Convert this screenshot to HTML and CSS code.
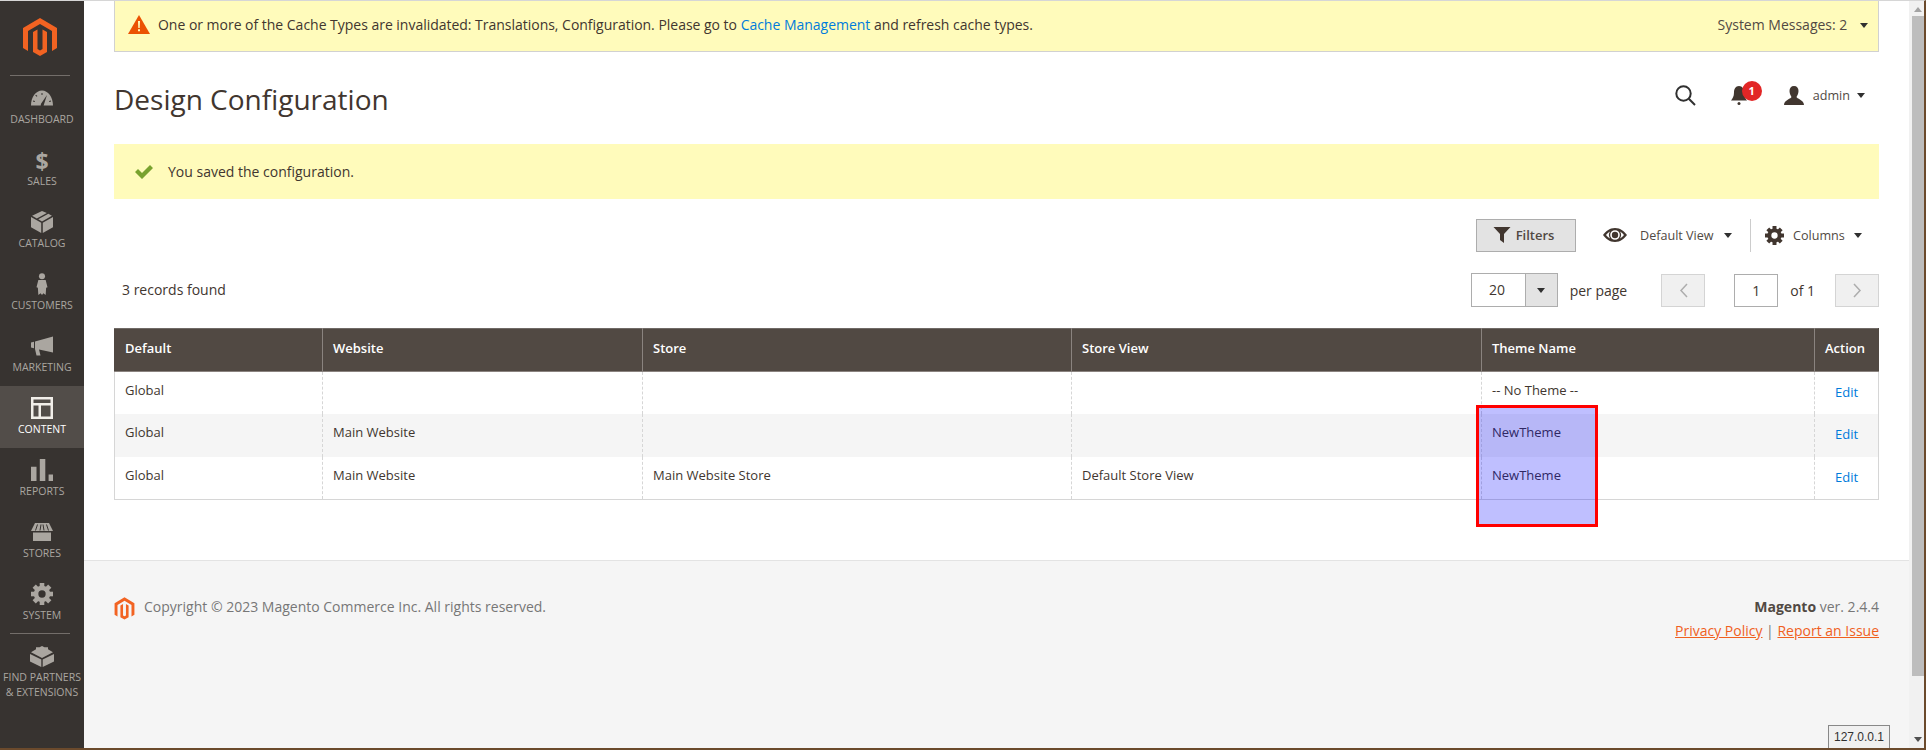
FILE: index.html
```html
<!DOCTYPE html>
<html lang="en">
<head>
  <meta charset="UTF-8" />
  <title>Design Configuration / Magento Admin</title>
  <link rel="stylesheet" href="styles.css">
</head>
<body>
  <svg class="defs" width="0" height="0">
    <symbol id="magento" viewBox="0 0 36 40">
      <path d="M18 0L35 10V30L30 33V13L18 6L6 13V33L1 30V10Z"/>
      <path d="M11 14L15.500 11.500V31L18 32.500L20.500 31V11.500L25 14V34L18 38L11 34Z"/>
    </symbol>
    <symbol id="gear" viewBox="0 0 24 24">
      <circle cx="12" cy="12" r="6.500" fill="none" stroke="currentColor" stroke-width="5"/>
      <g fill="currentColor">
        <rect x="9.500" y="0" width="5" height="5"/>
        <rect x="9.500" y="0" width="5" height="5" transform="rotate(45 12 12)"/>
        <rect x="9.500" y="0" width="5" height="5" transform="rotate(90 12 12)"/>
        <rect x="9.500" y="0" width="5" height="5" transform="rotate(135 12 12)"/>
        <rect x="9.500" y="0" width="5" height="5" transform="rotate(180 12 12)"/>
        <rect x="9.500" y="0" width="5" height="5" transform="rotate(225 12 12)"/>
        <rect x="9.500" y="0" width="5" height="5" transform="rotate(270 12 12)"/>
        <rect x="9.500" y="0" width="5" height="5" transform="rotate(315 12 12)"/>
      </g>
    </symbol>
  </svg>

  <div class="app">
    <aside class="sidebar">
      <div class="sidebar-logo">
        <svg class="logo-mark"><use href="#magento"/></svg>
      </div>
      <nav class="menu">
        <a class="menu-item">
          <svg class="menu-icon" viewBox="0 0 22 15"><path fill-rule="evenodd" d="M0 15C0 6.500 5 0 11 0s11 6.500 11 15H12.600L16 4.500 10 13.200 9.700 15zM4 10.500l-1.800-.6-.3 1 1.800.6zM6.400 5.500L5 4.200l-.7.800 1.400 1.300zM10.500 2.500h1v2h-1zM19.800 9.900l-1.800.6.300 1 1.800-.6z"/></svg>
          <span>Dashboard</span>
        </a>
        <a class="menu-item">
          <span class="dollar">$</span>
          <span>Sales</span>
        </a>
        <a class="menu-item">
          <svg class="menu-icon" viewBox="0 0 20 20"><path d="M9.300 20L0 14.800V5.500l9.300 5.200zM10.700 20l9.300-5.200V5.500l-9.300 5.200zM10 9.500L6.600 7.600l9.200-5.100L19 4.400zM5.300 6.800L1 4.400 10 0l4.400 1.900z"/></svg>
          <span>Catalog</span>
        </a>
        <a class="menu-item">
          <svg class="menu-icon" viewBox="0 0 12 24"><circle cx="6" cy="3.500" r="3.300"/><path d="M2 7.500h8l2 8-1.500.5-.5 8-2.500-1.800L6 24l-1.500-1.800L2 24l-.5-8L0 15.500z"/></svg>
          <span>Customers</span>
        </a>
        <a class="menu-item">
          <svg class="menu-icon" viewBox="0 0 22 19"><path d="M22 0v16L8 13l1.500 6H5.500L4 12.500V5zM0 6l3-.7v6.500L0 11z"/></svg>
          <span>Marketing</span>
        </a>
        <a class="menu-item is-active">
          <svg class="menu-icon" viewBox="0 0 22 22"><path fill-rule="evenodd" d="M0 0h22v22H0zM2.500 2.500v3.500h17V2.500zM2.500 8.500v11h5v-11zM10 8.500v11h9.500v-11z"/></svg>
          <span>Content</span>
        </a>
        <a class="menu-item">
          <svg class="menu-icon" viewBox="0 0 20 20"><path d="M0 7h5v13H0zM8 0h5v20H8zM16 14h4v6h-4z"/></svg>
          <span>Reports</span>
        </a>
        <a class="menu-item">
          <svg class="menu-icon" viewBox="0 0 22 18"><path d="M4 0h14l4 8H0zM2 9.500h18V18H2z"/><path class="cut" d="M6.500 1.500L4.500 7.500M10 1.500L9 7.500M12 1.500L13 7.500M15.500 1.500L17.500 7.500"/></svg>
          <span>Stores</span>
        </a>
        <a class="menu-item menu-item-last">
          <svg class="menu-icon"><use href="#gear"/></svg>
          <span>System</span>
        </a>
        <a class="menu-item menu-item-partners">
          <svg class="menu-icon menu-icon-lego" viewBox="0 0 24 22"><path d="M0 9l11.300 5.500V22L0 16.500zM24 9l-11.300 5.500V22L24 16.500z"/><path d="M12 1l2.500 1.200 3.500 0 0 2 5 3L12 13 1 7.200l5-3v-2h3.500z"/></svg>
          <span>Find Partners<br>&amp; Extensions</span>
        </a>
      </nav>
    </aside>

    <div class="page">
      <div class="notice">
        <div class="notice-text">
          <svg class="warn-icon" viewBox="0 0 22 19"><path d="M11 0l11 19H0z"/><path class="warn-mark" d="M10 6h2l-.3 7h-1.400zM10 14.300h2v2h-2z"/></svg>
          <span>One or more of the Cache Types are invalidated: Translations, Configuration. Please go to <a class="link">Cache Management</a> and refresh cache types.</span>
        </div>
        <div class="notice-more">System Messages: 2 <i class="caret caret-notice"></i></div>
      </div>

      <header class="page-head">
        <h1 class="page-title">Design Configuration</h1>
        <div class="head-actions">
          <svg class="search-icon" viewBox="0 0 21 21"><circle cx="8.500" cy="8.500" r="7.200"/><path d="M13.800 13.800L20 20"/></svg>
          <div class="bell">
            <svg class="bell-icon" viewBox="0 0 16 19"><path d="M8 0c3.500 0 5 3 5 6.500 0 4 1.500 6 3 8H0c1.500-2 3-4 3-8C3 3 4.500 0 8 0z"/><circle cx="8" cy="17.500" r="1.500"/></svg>
            <span class="bell-count">1</span>
          </div>
          <div class="user">
            <svg class="user-icon" viewBox="0 0 20 19"><path d="M10 0c3 0 4.500 2 4.500 5S13 10 12.500 11c0 1.500 7.500 3 7.500 8H0c0-5 7.500-6.500 7.500-8C7 10 5.500 8 5.500 5S7 0 10 0z"/></svg>
            <span>admin</span>
            <i class="caret"></i>
          </div>
        </div>
      </header>

      <div class="message">
        <svg class="check-icon" viewBox="0 0 18 14"><path d="M0 7l3-3 4 4 8-8 3 3L7 14z"/></svg>
        <span>You saved the configuration.</span>
      </div>

      <div class="grid-actions">
        <button class="filters-btn">
          <svg class="funnel-icon" viewBox="0 0 17 16"><path d="M0 0h17l-6.500 7v9l-4-3V7z"/></svg>
          Filters
        </button>
        <div class="grid-view">
          <svg class="eye-icon" viewBox="0 0 24 14"><path fill-rule="evenodd" d="M12 0c5.500 0 9.500 3.500 12 7-2.500 3.500-6.500 7-12 7S2.500 10.500 0 7c2.500-3.500 6.500-7 12-7zm0 2.200a4.800 4.800 0 1 0 0 9.600 4.800 4.800 0 0 0 0-9.600zM3 7c1.200 1.500 2.500 2.600 4 3.400A6 6 0 0 1 7 3.600C5.500 4.400 4.200 5.500 3 7zm18 0c-1.200-1.500-2.500-2.600-4-3.400a6 6 0 0 1 0 6.800c1.500-.8 2.800-1.900 4-3.400z"/><circle cx="12" cy="7" r="3.200"/></svg>
          <span>Default View</span>
          <i class="caret"></i>
        </div>
        <div class="grid-columns">
          <svg class="gear-icon"><use href="#gear"/></svg>
          <span>Columns</span>
          <i class="caret"></i>
        </div>
      </div>

      <div class="grid-pager">
        <div class="records">3 records found</div>
        <div class="pager">
          <div class="per-page">
            <span class="per-page-value">20</span>
            <span class="per-page-toggle"><i class="caret"></i></span>
          </div>
          <span class="per-page-label">per page</span>
          <span class="page-btn page-prev"><svg viewBox="0 0 9 15"><path d="M8 1L2 7.500 8 14"/></svg></span>
          <span class="page-input">1</span>
          <span class="page-of">of 1</span>
          <span class="page-btn"><svg viewBox="0 0 9 15"><path d="M1 1l6 6.500L1 14"/></svg></span>
        </div>
      </div>

      <table class="data-grid">
        <colgroup>
          <col class="col-default"><col class="col-website"><col class="col-store"><col class="col-view"><col class="col-theme"><col class="col-action">
        </colgroup>
        <thead>
          <tr><th>Default</th><th>Website</th><th>Store</th><th>Store View</th><th>Theme Name</th><th>Action</th></tr>
        </thead>
        <tbody>
          <tr><td>Global</td><td></td><td></td><td></td><td>-- No Theme --</td><td class="cell-action"><a class="link">Edit</a></td></tr>
          <tr class="row-alt"><td>Global</td><td>Main Website</td><td></td><td></td><td>NewTheme</td><td class="cell-action"><a class="link">Edit</a></td></tr>
          <tr><td>Global</td><td>Main Website</td><td>Main Website Store</td><td>Default Store View</td><td>NewTheme</td><td class="cell-action"><a class="link">Edit</a></td></tr>
        </tbody>
      </table>

      <footer class="page-footer">
        <div class="copyright">
          <svg class="footer-logo"><use href="#magento"/></svg>
          <span>Copyright © 2023 Magento Commerce Inc. All rights reserved.</span>
        </div>
        <div class="footer-side">
          <div class="version"><b>Magento</b> ver. 2.4.4</div>
          <div class="footer-links"><a>Privacy Policy</a> | <a>Report an Issue</a></div>
        </div>
      </footer>

      <div class="highlight"></div>
    </div>

    <div class="scrollbar">
      <i class="scroll-up"></i>
      <div class="scroll-thumb"></div>
      <i class="scroll-down"></i>
    </div>
  </div>

  <div class="host-tag">127.0.0.1</div>
</body>
</html>
```

FILE: styles.css
```css
html, body {
  margin: 0;
  height: 750px;
  overflow: hidden;
}
body {
  font-family: "Open Sans", sans-serif;
  font-size: 14px;
  color: #41362f;
  background: #fff;
  box-sizing: border-box;
  border-top: 1px solid #d6d6d6;
  border-right: 2px solid #6b4a2c;
  border-bottom: 2px solid #6b4a2c;
}
.defs {
  position: absolute;
}
.app {
  display: flex;
  height: 747px;
}
.caret {
  display: inline-block;
  width: 0;
  height: 0;
  border-left: 4px solid transparent;
  border-right: 4px solid transparent;
  border-top: 5px solid #303030;
}
.link {
  color: #007bdb;
}

/* sidebar */
.sidebar {
  width: 84px;
  flex: none;
  background: #373330;
  color: #aaa6a0;
}
.sidebar-logo {
  height: 75px;
  margin: 0 14px 0 10px;
  width: 60px;
  border-bottom: 1px solid #736e6a;
  display: flex;
  justify-content: center;
  padding-top: 17px;
  box-sizing: border-box;
}
.logo-mark {
  width: 36px;
  height: 40px;
  fill: #f26322;
}
.menu-item {
  display: flex;
  flex-direction: column;
  align-items: center;
  justify-content: flex-start;
  height: 62px;
  box-sizing: border-box;
  font-size: 10.500px;
  line-height: 14px;
  text-transform: uppercase;
  text-align: center;
  padding-top: 11px;
}
.menu-item-last {
  position: relative;
}
.menu-item-last::after {
  content: "";
  position: absolute;
  left: 10px;
  bottom: 0;
  width: 60px;
  border-bottom: 1px solid #736e6a;
}
.menu-item-partners {
  line-height: 15px;
}
.menu-icon {
  display: block;
  flex: none;
  width: 22px;
  height: 22px;
  margin-bottom: 3px;
  fill: #aaa6a0;
}
.menu-icon-lego {
  width: 24px;
}
.menu-item .cut {
  fill: none;
  stroke: #373330;
  stroke-width: 1;
}
.menu-item .dollar {
  font-size: 23px;
  font-weight: 700;
  line-height: 25px;
  display: block;
}
.menu-item.is-active {
  background: #524d49;
  color: #fff;
}
.is-active .menu-icon {
  fill: #f1eee9;
}

/* main column */
.page {
  flex: 1;
  min-width: 0;
  position: relative;
  display: flex;
  flex-direction: column;
}
.notice {
  margin: 0 30px;
  height: 51px;
  box-sizing: border-box;
  background: #fffbbb;
  border: 1px solid #d1d1d1;
  border-top: none;
  display: flex;
  align-items: center;
  justify-content: space-between;
  padding: 0 10px 3px 13px;
  flex: none;
}
.notice-text {
  display: flex;
  align-items: center;
  gap: 8px;
  letter-spacing: -0.020px;
}
.warn-icon {
  width: 22px;
  height: 19px;
  fill: #eb5202;
}
.warn-mark {
  fill: #fffbbb;
}
.notice-more {
  color: #514943;
}
.caret-notice {
  margin-left: 9px;
  vertical-align: 2px;
}

.page-head {
  height: 92px;
  margin: 0 30px;
  flex: none;
  display: flex;
  align-items: center;
  justify-content: space-between;
}
.page-title {
  margin: 2px 0 0;
  font-size: 28px;
  font-weight: 400;
  color: #41362f;
}
.head-actions {
  display: flex;
  align-items: center;
  padding: 0 14px 6px 0;
}
.search-icon {
  width: 21px;
  height: 21px;
  fill: none;
  stroke: #303030;
  stroke-width: 2;
}
.bell {
  position: relative;
  margin-left: 35px;
  width: 16px;
  height: 19px;
}
.bell-icon {
  display: block;
  width: 16px;
  height: 19px;
  fill: #41362f;
}
.bell-count {
  position: absolute;
  left: 11px;
  top: -5px;
  width: 20px;
  height: 20px;
  border-radius: 50%;
  background: #e22626;
  color: #fff;
  font-size: 11px;
  font-weight: 700;
  line-height: 20px;
  text-align: center;
}
.user {
  margin-left: 37px;
  display: flex;
  align-items: center;
  font-size: 12.600px;
  color: #514943;
}
.user-icon {
  width: 20px;
  height: 19px;
  margin-right: 9px;
  fill: #41362f;
}
.user .caret {
  margin-left: 7px;
}

.message {
  margin: 0 30px;
  height: 55px;
  flex: none;
  box-sizing: border-box;
  background: #fffbbb;
  display: flex;
  align-items: center;
  padding-left: 21px;
  color: #41362f;
}
.check-icon {
  width: 18px;
  height: 14px;
  margin-right: 15px;
  fill: #79a22e;
}

.grid-actions {
  margin: 20px 30px 0;
  height: 33px;
  flex: none;
  display: flex;
  justify-content: flex-end;
  align-items: center;
  font-size: 12.600px;
  color: #514943;
  padding-right: 17px;
}
.filters-btn {
  width: 100px;
  height: 33px;
  box-sizing: border-box;
  background: #e3e3e3;
  border: 1px solid #adadad;
  font-family: inherit;
  font-size: 13px;
  font-weight: 600;
  color: #514943;
  display: flex;
  align-items: center;
  justify-content: center;
  gap: 5px;
  padding: 0 5px 2px 0;
}
.funnel-icon {
  width: 18px;
  height: 16px;
  fill: #41362f;
}
.grid-view {
  display: flex;
  align-items: center;
  margin-left: 27px;
  width: 148px;
  height: 33px;
  box-sizing: border-box;
  border-right: 1px solid #ccc;
  padding-bottom: 1px;
}
.eye-icon {
  width: 24px;
  height: 14px;
  fill: #41362f;
  margin-right: 13px;
}
.grid-view .caret {
  margin-left: 10px;
}
.grid-columns {
  display: flex;
  align-items: center;
  margin-left: 14px;
  width: 97px;
  padding-bottom: 1px;
}
.gear-icon {
  width: 19px;
  height: 19px;
  color: #41362f;
  margin-right: 9px;
}
.grid-columns .caret {
  margin-left: auto;
}

.grid-pager {
  margin: 21px 30px 0;
  height: 34px;
  flex: none;
  display: flex;
  align-items: center;
  justify-content: space-between;
  font-size: 14px;
  color: #41362f;
}
.records {
  padding: 0 0 2px 8px;
}
.pager {
  display: flex;
  align-items: center;
}
.per-page {
  display: flex;
  width: 87px;
  height: 34px;
  box-sizing: border-box;
  border: 1px solid #adadad;
}
.per-page-value {
  width: 53px;
  font-size: 14px;
  line-height: 32px;
  text-align: center;
  padding-right: 2px;
  box-sizing: border-box;
}
.per-page-toggle {
  flex: 1;
  background: #e3e3e3;
  border-left: 1px solid #adadad;
  display: flex;
  align-items: center;
  justify-content: center;
}
.per-page-label {
  margin-left: 12px;
  margin-right: 34px;
}
.page-btn {
  width: 44px;
  height: 33px;
  box-sizing: border-box;
  background: #f0f0f0;
  border: 1px solid #d4d4d4;
  display: flex;
  align-items: center;
  justify-content: center;
}
.page-btn svg {
  width: 9px;
  height: 15px;
  fill: none;
  stroke: #adadad;
  stroke-width: 1.500;
}
.page-input {
  width: 44px;
  height: 33px;
  margin-left: 29px;
  box-sizing: border-box;
  border: 1px solid #adadad;
  font-size: 14px;
  line-height: 31px;
  text-align: center;
}
.page-of {
  margin: 0 20px 0 12px;
}

.data-grid {
  margin: 21px 30px 0;
  width: 1764px;
  flex: none;
  table-layout: fixed;
  border-collapse: collapse;
  font-size: 13px;
  border-bottom: 1px solid #d6d6d6;
}
.col-default { width: 208px; }
.col-website { width: 320px; }
.col-store { width: 429px; }
.col-view { width: 410px; }
.col-theme { width: 333px; }
.col-action { width: 64px; }
.data-grid th {
  height: 43px;
  box-sizing: border-box;
  background: #514943;
  color: #fff;
  font-weight: 600;
  text-align: left;
  padding: 0 0 5px 10px;
  border: 1px solid #8a837f;
  border-top-color: #706a66;
  border-left-color: #514943;
  border-right-color: #8a837f;
}
.data-grid th:last-child {
  border-right-color: #514943;
}
.data-grid td {
  height: 42.600px;
  box-sizing: border-box;
  padding: 9px 10px 0;
  vertical-align: top;
  line-height: 18px;
  border-right: 1px dashed #d6d6d6;
}
.data-grid td:first-child {
  border-left: 1px solid #d6d6d6;
}
.data-grid td:last-child {
  border-right: 1px solid #d6d6d6;
}
.data-grid .row-alt td {
  background: #f5f5f5;
}
.data-grid .cell-action {
  text-align: center;
  padding-top: 11px;
  padding-left: 0;
  padding-right: 0;
}

.page-footer {
  margin-top: 60px;
  flex: 1;
  background: #f5f5f5;
  border-top: 1px solid #e3e3e3;
  padding: 36px 30px 0;
  display: flex;
  justify-content: space-between;
  color: #777;
}
.copyright {
  display: flex;
  align-items: flex-start;
  gap: 9px;
  line-height: 20px;
}
.footer-logo {
  width: 21px;
  height: 24px;
  fill: #f26322;
  flex: none;
}
.footer-side {
  text-align: right;
  line-height: 20px;
}
.version b {
  font-weight: 700;
  color: #514943;
}
.footer-links {
  margin-top: 4px;
}
.footer-links a {
  color: #f0601e;
  text-decoration: underline;
}

/* annotation drawn over the grid */
.highlight {
  position: absolute;
  left: 1392px;
  top: 404px;
  width: 122px;
  height: 122px;
  box-sizing: border-box;
  border: 3px solid #f00;
  background: rgba(0, 0, 255, 0.25);
}

.scrollbar {
  width: 15px;
  flex: none;
  background: #f1f1f1;
  display: flex;
  flex-direction: column;
  align-items: flex-end;
  position: relative;
}
.scroll-thumb {
  width: 12px;
  height: 660px;
  margin-top: 15px;
  background: #bdbdbd;
}
.scroll-up, .scroll-down {
  position: absolute;
  right: 2px;
  border-left: 4px solid transparent;
  border-right: 4px solid transparent;
}
.scroll-up {
  top: 6px;
  border-bottom: 5px solid #a3a3a3;
}
.scroll-down {
  bottom: 6px;
  border-top: 5px solid #505050;
}

.host-tag {
  position: absolute;
  left: 1828px;
  top: 725px;
  width: 62px;
  height: 23px;
  box-sizing: border-box;
  background: #f0f0f0;
  border: 1px solid #888;
  border-bottom: none;
  font-family: "Liberation Sans", sans-serif;
  font-size: 12px;
  line-height: 22px;
  text-align: center;
  color: #303030;
}
```
